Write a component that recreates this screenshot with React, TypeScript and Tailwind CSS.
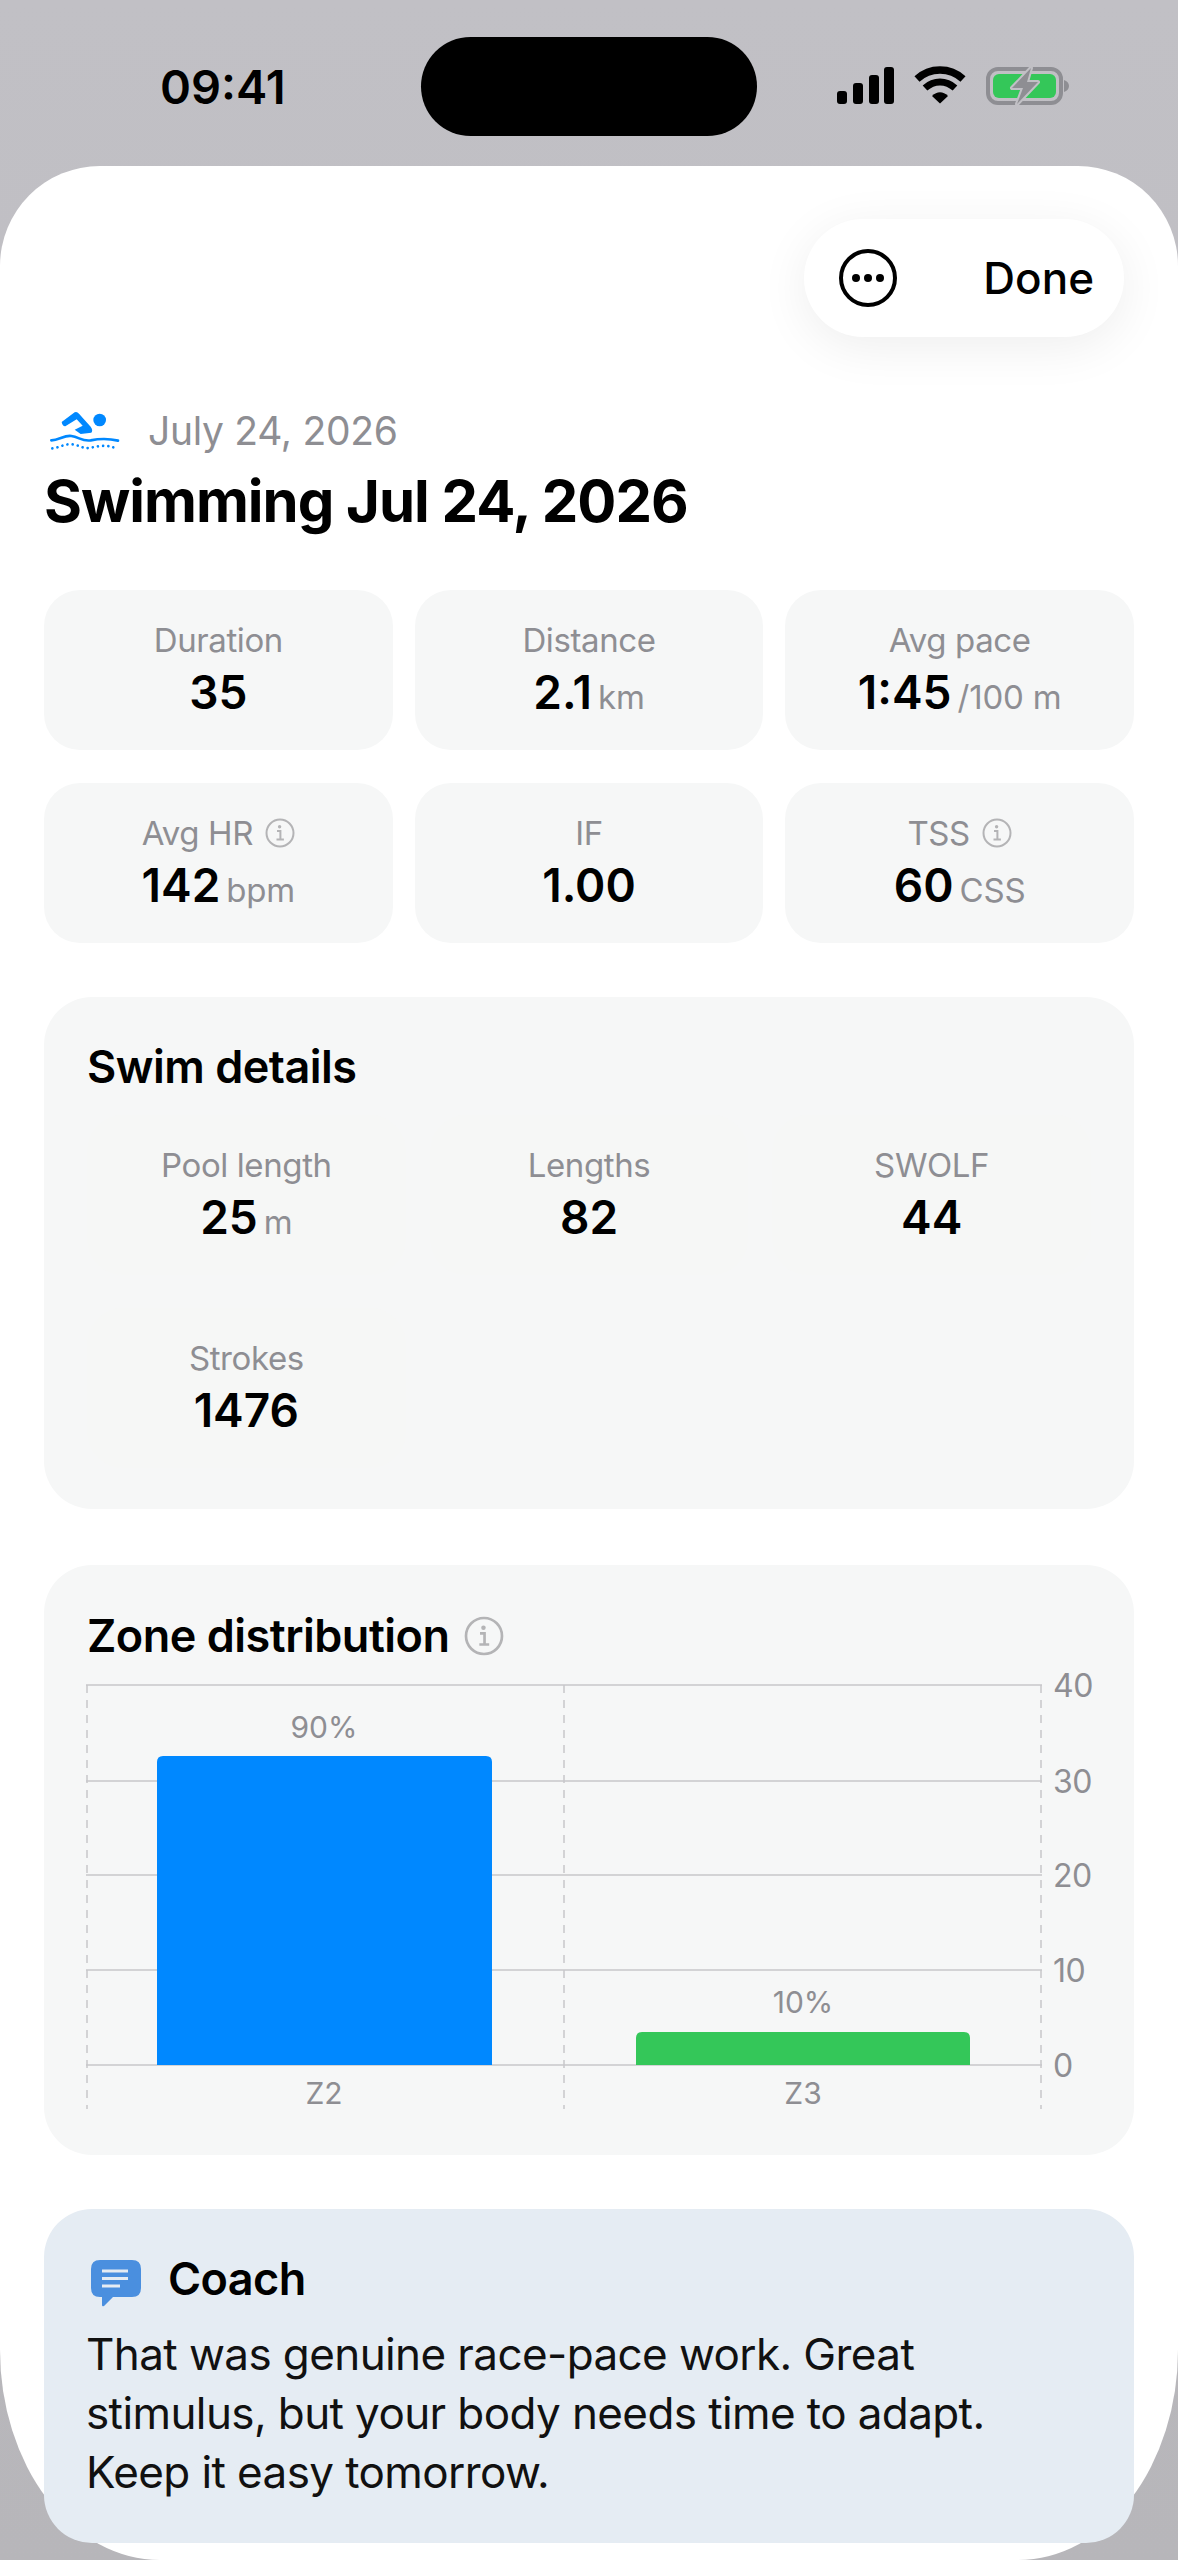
const fontStack = "font-['Inter','Noto_Sans',sans-serif]";

function InfoIcon({ size, color = "#b4b4b6" }: { size: number; color?: string }) {
  return (
    <svg width={size} height={size} viewBox="0 0 30 30" fill="none" className="shrink-0">
      <circle cx="15" cy="15" r="13.5" stroke={color} strokeWidth="2" />
      <circle cx="14.6" cy="8.8" r="1.7" fill={color} />
      <path d="M12 13h3.4v8M11.5 21.4h7.4" stroke={color} strokeWidth="2" />
    </svg>
  );
}

function Unit({ children }: { children: string }) {
  return <span className="ml-[6px] text-[33px] font-normal tracking-[-0.2px] text-[#8e8e93]">{children}</span>;
}

function Stat({ label, value, unit, info, cell }: { label: string; value: string; unit?: string; info?: boolean; cell?: boolean }) {
  return (
    <div className={`h-[160px] pt-[28px] flex flex-col items-center rounded-[36px] ${cell ? "bg-[#f6f7f6]" : "bg-[#f6f7f7]"}`}>
      <div className="flex items-center gap-[12px] h-[44px] text-[33px] leading-[44px] tracking-[-0.4px] text-[#8e8e93]">
        {label}
        {info && <InfoIcon size={30} />}
      </div>
      <div className="h-[60px] leading-[60px] text-[46px] font-semibold text-black whitespace-nowrap">
        {value}
        {unit && <Unit>{unit}</Unit>}
      </div>
    </div>
  );
}

function SignalIcons() {
  return (
    <div className="flex items-start gap-[20px] mt-[66px] ml-[80px]">
      <svg width="57" height="38" viewBox="0 0 57 38" className="mt-[1px]">
        <rect x="0" y="24" width="10" height="13" rx="3" fill="#000" />
        <rect x="16" y="16" width="10" height="21" rx="3" fill="#000" />
        <rect x="32" y="8" width="10" height="29" rx="3" fill="#000" />
        <rect x="47" y="0" width="10" height="37" rx="3" fill="#000" />
      </svg>
      <svg width="52" height="38" viewBox="0 0 52 38" fill="none">
        <path d="M3 13 C16 1 36 1 49 13" stroke="#000" strokeWidth="7.5" strokeLinecap="butt" />
        <path d="M11 22 C20 14 32 14 41 22" stroke="#000" strokeWidth="7" />
        <path d="M18 30 L26 37.5 L34 30 C29 25 23 25 18 30 Z" fill="#000" />
      </svg>
      <svg width="84" height="40" viewBox="0 0 84 40" fill="none">
        <rect x="2" y="3" width="73" height="34" rx="10" stroke="#8e8e93" strokeWidth="4" />
        <rect x="7" y="8" width="63" height="24" rx="6" fill="#34c759" />
        <path d="M78 14 C81 15 83 17 83 20 C83 23 81 25 78 26 Z" fill="#8e8e93" />
        <path d="M45 2 L26 22 L37 22 L31 38 L52 16 L41 16 Z" fill="#8e8e93" stroke="#c1c0c5" strokeWidth="4" paintOrder="stroke" strokeLinejoin="round" />
      </svg>
    </div>
  );
}

function SwimIcon() {
  return (
    <svg width="70" height="40" viewBox="148 95 210 120" className="ml-[6px] shrink-0">
      <path d="M183 128 L222 99 Q229 96 235 103 L270 142 Q278 152 272 160 L240 164 L222 151 L246 139 L228 120 L194 141 Q186 142 183 128 Z" fill="#0088ff" />
      <circle cx="297" cy="122" r="19" fill="#0088ff" />
      <path d="M152 183 C175 183 190 167 212 170 C235 173 245 187 270 183 C295 178 320 176 352 184" stroke="#0088ff" strokeWidth="8" fill="none" strokeLinecap="round" />
      <path d="M155 207 C180 204 190 193 215 195 C235 197 245 208 265 206 C290 202 315 193 348 208" stroke="#0088ff" strokeWidth="8" fill="none" strokeLinecap="round" strokeDasharray="0.1 15.5" />
    </svg>
  );
}

function ZoneChart() {
  const grid = [
    { y: 14, label: "40" },
    { y: 110, label: "30" },
    { y: 204, label: "20" },
    { y: 299, label: "10" },
    { y: 394, label: "0" },
  ];
  return (
    <svg width="1030" height="458" viewBox="0 -8 1030 458" className="-mt-[1px] -ml-[1px] block">
      {grid.map((g) => (
        <g key={g.label}>
          <line x1="0" x2="956" y1={g.y} y2={g.y} stroke="#d3d3d5" strokeWidth="2" />
          <text x="967" y={g.y + 12} fontSize="32" letterSpacing="-0.5" fill="#8e8e93">{g.label}</text>
        </g>
      ))}
      {[1, 478, 955].map((x) => (
        <line key={x} x1={x} x2={x} y1="14" y2="438" stroke="#c8c8ca" strokeWidth="1.5" strokeDasharray="8 7" />
      ))}
      <path d="M71 394 V91 Q71 85 77 85 H400 Q406 85 406 91 V394 Z" fill="#0088ff" />
      <path d="M550 394 V367 Q550 361 556 361 H878 Q884 361 884 367 V394 Z" fill="#34c759" />
      <text x="238" y="67" fontSize="30" fill="#8e8e93" textAnchor="middle">90%</text>
      <text x="717" y="342" fontSize="30" fill="#8e8e93" textAnchor="middle">10%</text>
      <text x="238" y="433" fontSize="30" fill="#8e8e93" textAnchor="middle">Z2</text>
      <text x="717" y="433" fontSize="30" fill="#8e8e93" textAnchor="middle">Z3</text>
    </svg>
  );
}

export default function App() {
  return (
    <div className={`w-[1178px] h-[2560px] flex flex-col overflow-hidden bg-linear-to-b from-[#c1c0c5] to-[#b7b6ba] ${fontStack}`}>
      {/* Status bar */}
      <div className="h-[166px] shrink-0 flex items-start">
        <div className="w-[421px] pl-[160px] pt-[56px] text-[47px] leading-[62px] font-semibold text-black">09:41</div>
        <div className="w-[336px] h-[99px] mt-[37px] rounded-[50px] bg-black" />
        <SignalIcons />
      </div>

      {/* Sheet */}
      <div className="flex-1 bg-white px-[44px] pt-[53px] [border-radius:100px_100px_160px_160px/100px_100px_210px_210px]">
        <div className="flex justify-end pr-[10px]">
          <div className="w-[320px] h-[118px] rounded-[59px] bg-white shadow-[0_10px_50px_rgba(0,0,0,0.07)] flex items-center pl-[35px] pr-[30px] justify-between">
            <svg width="58" height="58" viewBox="0 0 58 58" fill="none">
              <circle cx="29" cy="29" r="27" stroke="#000" strokeWidth="4" />
              <circle cx="17" cy="29" r="4" fill="#000" />
              <circle cx="29" cy="29" r="4" fill="#000" />
              <circle cx="41" cy="29" r="4" fill="#000" />
            </svg>
            <span className="text-[44px] font-medium text-black">Done</span>
          </div>
        </div>

        <div className="mt-[69px] flex items-center gap-[28px] h-[50px]">
          <SwimIcon />
          <span className="text-[39px] leading-[50px] tracking-[-0.3px] text-[#8e8e93]">July 24, 2026</span>
        </div>
        <h1 className="mt-[15px] text-[58px] leading-[60px] font-bold tracking-[-1px] text-black">Swimming Jul 24, 2026</h1>

        <div className="mt-[59px] grid grid-cols-3 gap-x-[22px] gap-y-[33px]">
          <Stat label="Duration" value="35" />
          <Stat label="Distance" value="2.1" unit="km" />
          <Stat label="Avg pace" value="1:45" unit="/100 m" />
          <Stat label="Avg HR" value="142" unit="bpm" info />
          <Stat label="IF" value="1.00" />
          <Stat label="TSS" value="60" unit="CSS" info />
        </div>

        <section className="mt-[54px] h-[512px] rounded-[48px] bg-[#f6f7f7] px-[43px] pt-[42px]">
          <h2 className="text-[45px] leading-[56px] font-semibold tracking-[-0.5px] text-black">Swim details</h2>
          <div className="mt-[20px] grid grid-cols-3 gap-x-[24px] gap-y-[33px]">
            <Stat label="Pool length" value="25" unit="m" cell />
            <Stat label="Lengths" value="82" cell />
            <Stat label="SWOLF" value="44" cell />
            <Stat label="Strokes" value="1476" cell />
          </div>
        </section>

        <section className="mt-[56px] h-[590px] rounded-[48px] bg-[#f6f7f7] px-[43px] pt-[43px]">
          <div className="flex items-center gap-[14px] h-[56px]">
            <h2 className="text-[45px] leading-[56px] font-semibold tracking-[-0.5px] text-black">Zone distribution</h2>
            <InfoIcon size={40} />
          </div>
          <ZoneChart />
        </section>

        <section className="mt-[54px] h-[334px] rounded-[48px] bg-[#e5ecf3] pl-[42px] pr-[90px] pt-[42px]">
          <div className="flex items-center gap-[27px] h-[56px]">
            <svg width="50" height="48" viewBox="0 0 50 48" className="mt-[10px] ml-[5px]">
              <path d="M9 0 H41 Q50 0 50 9 V28 Q50 37 41 37 H22 L13 46 Q11 47 11 45 V37 H9 Q0 37 0 28 V9 Q0 0 9 0 Z" fill="#4a8fdf" />
              <path d="M11 11 H37 M11 18.5 H37 M11 26 H29" stroke="#e5ecf3" strokeWidth="3" />
            </svg>
            <h2 className="text-[45px] leading-[56px] font-semibold tracking-[-0.6px] text-black">Coach</h2>
          </div>
          <p className="mt-[18px] text-[44px] leading-[59px] tracking-[-0.6px] text-[#111]">
            That was genuine race-pace work. Great stimulus, but your body needs time to adapt. Keep it easy tomorrow.
          </p>
        </section>
      </div>
    </div>
  );
}
